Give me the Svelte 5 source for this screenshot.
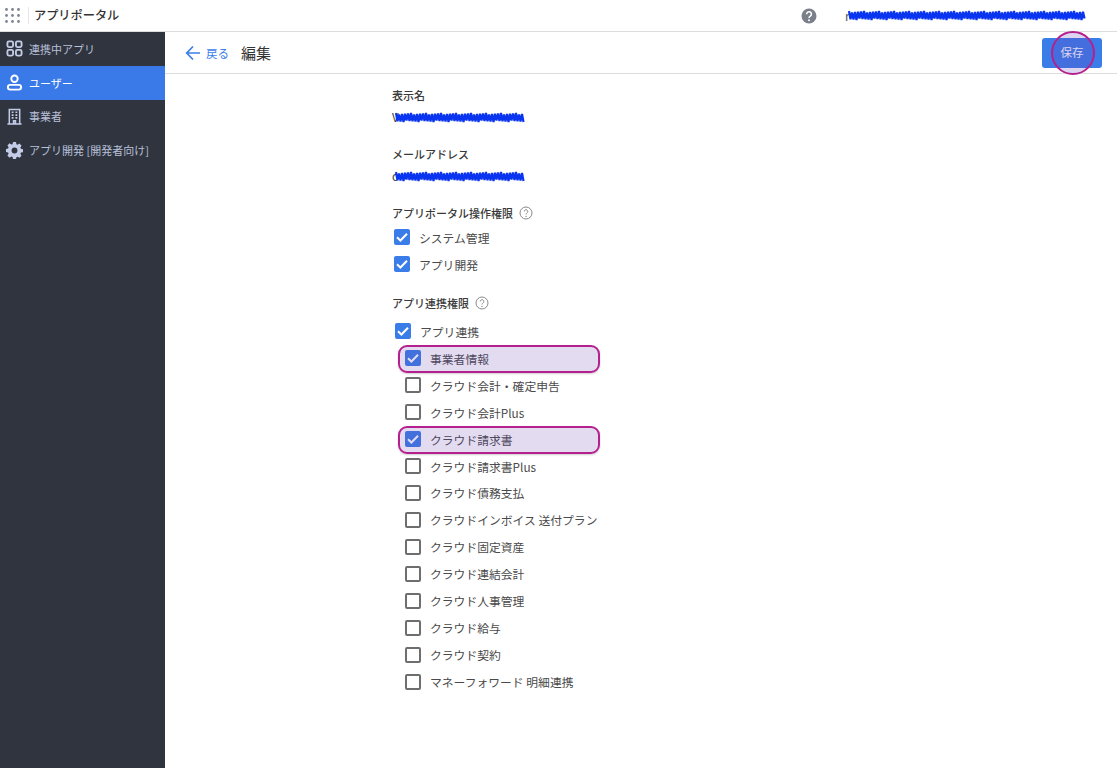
<script lang="ts">
  const nav = [
    { id: 'apps', label: '連携中アプリ' },
    { id: 'user', label: 'ユーザー', active: true },
    { id: 'office', label: '事業者' },
    { id: 'dev', label: 'アプリ開発 [開発者向け]' }
  ];
  const portal = ['システム管理', 'アプリ開発'];
  const apps = [
    { label: '事業者情報', checked: true },
    { label: 'クラウド会計・確定申告' },
    { label: 'クラウド会計Plus' },
    { label: 'クラウド請求書', checked: true },
    { label: 'クラウド請求書Plus' },
    { label: 'クラウド債務支払' },
    { label: 'クラウドインボイス 送付プラン' },
    { label: 'クラウド固定資産' },
    { label: 'クラウド連結会計' },
    { label: 'クラウド人事管理' },
    { label: 'クラウド給与' },
    { label: 'クラウド契約' },
    { label: 'マネーフォワード 明細連携' }
  ];

  // redaction marker: a tight zigzag with a bit of fixed jitter
  function scrawl(w: number, h: number) {
    let d = '';
    for (let x = 0, i = 0; x <= w; x += 1.5, i++) {
      const j = ((i * 7) % 5) * 0.35;
      const y = i % 2 ? h - j : j;
      d += (i ? 'L' : 'M') + x + ' ' + y;
    }
    return d;
  }
</script>

{#snippet box(checked)}
  <span class="box" class:checked>
    {#if checked}
      <svg viewBox="0 0 16 16" width="16" height="16"><path d="M3 8.2l3.4 3.3L13 4.8" fill="none" stroke="#fff" stroke-width="2"/></svg>
    {/if}
  </span>
{/snippet}

{#snippet help()}
  <svg class="help" viewBox="0 0 14 14" width="14" height="14">
    <circle cx="7" cy="7" r="6" fill="none" stroke="#8a8a8a" stroke-width="1"/>
    <path d="M5.2 5.5a1.8 1.8 0 1 1 2.7 1.6c-.6.4-.9.7-.9 1.4" fill="none" stroke="#8a8a8a" stroke-width="1"/>
    <circle cx="7" cy="10.4" r=".7" fill="#8a8a8a"/>
  </svg>
{/snippet}

{#snippet scribble(w, h)}
  <svg class="scribble" viewBox="-1 -1 {w + 2} {h + 2}" width={w + 2} height={h + 2}>
    <path d={scrawl(w, h)} fill="none" stroke="#0a35f0" stroke-width="2.2"/>
  </svg>
{/snippet}

<div class="page">
  <header class="top">
    <svg class="grid" viewBox="0 0 15 15" width="15" height="15" fill="#7d8391">
      {#each [1.5, 7.5, 13.5] as y}
        {#each [1.5, 7.5, 13.5] as x}
          <circle cx={x} cy={y} r="1.4"/>
        {/each}
      {/each}
    </svg>
    <span class="sep"></span>
    <span class="title">アプリポータル</span>
    <svg class="q" viewBox="0 0 16 16" width="16" height="16">
      <circle cx="8" cy="8" r="7.5" fill="#7b7f8a"/>
      <path d="M5.6 6.2a2.4 2.4 0 1 1 3.7 2c-.9.6-1.3.9-1.3 1.9" fill="none" stroke="#fff" stroke-width="1.6"/>
      <circle cx="8" cy="12.3" r="1" fill="#fff"/>
    </svg>
    <span class="account"><i>r</i>{@render scribble(236, 9)}</span>
  </header>

  <div class="body">
    <aside>
      {#each nav as item}
        <div class="nav" class:active={item.active}>
          <span class="ico">
            {#if item.id === 'apps'}
              <svg viewBox="0 0 18 18" width="17" height="17" fill="none" stroke="currentColor" stroke-width="2">
                <rect x="1.5" y="1.5" width="6" height="6" rx="1.6"/><rect x="10.5" y="1.5" width="6" height="6" rx="1.6"/>
                <rect x="1.5" y="10.5" width="6" height="6" rx="1.6"/><rect x="10.5" y="10.5" width="6" height="6" rx="1.6"/>
              </svg>
            {:else if item.id === 'user'}
              <svg viewBox="0 0 18 18" width="17" height="17" fill="none" stroke="currentColor" stroke-width="2">
                <circle cx="9" cy="5" r="3.4"/><rect x="2" y="11.5" width="14" height="5" rx="2.5"/>
              </svg>
            {:else if item.id === 'office'}
              <svg viewBox="0 0 18 18" width="17" height="17" fill="none" stroke="currentColor" stroke-width="1.6">
                <path d="M1.5 17h15M3.5 17V1.5h11V17"/>
                <path d="M6 4.5h2M10 4.5h2M6 7.5h2M10 7.5h2M6 10.5h2M10 10.5h2M8 17v-3.5h2V17" stroke-width="1.7"/>
              </svg>
            {:else}
              <svg viewBox="0 0 18 18" width="17" height="17" fill="currentColor">
                <path fill-rule="evenodd" d="M7.4 .5h3.2l.4 2.3 1.3.6 2-1.3 2.2 2.3-1.3 1.9.6 1.4 2.2.4v3.2l-2.2.4-.6 1.4 1.3 1.9-2.2 2.3-2-1.3-1.3.6-.4 2.3H7.4L7 16.4l-1.3-.6-2 1.3-2.2-2.3 1.3-1.9-.6-1.4L0 11.1V7.9l2.2-.4.6-1.4L1.5 4.2l2.2-2.3 2 1.3L7 2.8zM9 6.4a3.1 3.1 0 1 0 0 6.2 3.1 3.1 0 0 0 0-6.2z" transform="translate(0 -.5)"/>
              </svg>
            {/if}
          </span>
          <span>{item.label}</span>
        </div>
      {/each}
    </aside>

    <main>
      <div class="subbar">
        <svg class="back" viewBox="0 0 16 16" width="16" height="16" fill="none" stroke="#3b7de8" stroke-width="1.7">
          <path d="M15 8H2M8 1.5L1.7 8 8 14.5"/>
        </svg>
        <span class="backlabel">戻る</span>
        <h1>編集</h1>
        <button>保存<span class="ring"></span></button>
      </div>

      <form>
        <div class="label">表示名</div>
        <div class="value"><i>V</i>{@render scribble(128, 9)}</div>

        <div class="label">メールアドレス</div>
        <div class="value"><i>c</i>{@render scribble(128, 9)}</div>

        <div class="label">アプリポータル操作権限 {@render help()}</div>
        <div class="checks">
          {#each portal as p}
            <div class="check">{@render box(true)}<span>{p}</span></div>
          {/each}
        </div>

        <div class="label">アプリ連携権限 {@render help()}</div>
        <div class="check parent">{@render box(true)}<span>アプリ連携</span></div>
        {#each apps as a}
          <div class="check child" class:mark={a.checked}>{@render box(!!a.checked)}<span>{a.label}</span></div>
        {/each}
      </form>
    </main>
  </div>
</div>

<style>
  :global(body) { margin: 0; background: #fff; }
  .page { height: 768px; overflow: hidden; font-family: "Noto Sans CJK JP", "Noto Sans", sans-serif; color: #3a3a3a; font-size: 13px; }
  i { font-style: normal; }

  .top { height: 31px; border-bottom: 1px solid #dcdcdc; display: flex; align-items: center; }
  .grid { margin-left: 5px; }
  .sep { width: 1px; height: 17px; background: #e6e6e6; margin: 0 5px 0 8px; }
  .title { font-size: 12.2px; font-weight: 500; color: #333; margin-top: -1px; }
  .q { margin-left: auto; }
  .account { display: flex; align-items: center; width: 240px; margin: 0 32px 0 28px; color: #555; font-size: 12px; }
  .account i { width: 3px; }
  .scribble { display: block; flex: none; }

  .body { display: flex; height: 736px; }
  aside { width: 165px; flex: none; background: #2f343f; color: #b9c0d8; }
  .nav { height: 33.75px; display: flex; align-items: center; font-size: 11px; }
  .nav.active { background: #3a7ae8; color: #fff; }
  .ico { width: 29px; display: flex; padding-left: 5.5px; box-sizing: border-box; color: #c3cbe6; }
  .nav.active .ico { color: #fff; }

  main { flex: 1; min-width: 0; }
  .subbar { height: 41px; border-bottom: 1px solid #dcdcdc; display: flex; align-items: center; padding: 0 15px 0 20px; }
  .back { margin-right: 5px; }
  .backlabel { color: #3b7de8; font-size: 11.5px; margin-right: 12px; }
  h1 { margin: -1px 0 0; font-size: 15px; font-weight: 400; color: #333; }
  button { position: relative; margin-left: auto; width: 60px; height: 30px; background: #3b7de8; color: #fff; border: 0; border-radius: 3px; font: inherit; font-size: 11.5px; padding: 0 0 1px; }
  .ring { position: absolute; left: 9px; top: -7px; width: 44px; height: 44px; box-sizing: border-box; border: 2px solid #b5208f; border-radius: 50%; background: rgba(100, 60, 180, .22); }

  form { width: 500px; padding: 12px 0 0 227px; }
  .label { font-size: 11px; font-weight: 500; color: #3a3a3a; height: 18px; line-height: 18px; display: flex; align-items: center; gap: 3px; }
  .help { margin-left: 3px; }
  .value { height: 41px; padding-top: 6px; box-sizing: border-box; display: flex; align-items: flex-start; font-size: 11.5px; line-height: 14px; }
  .value i { width: 3px; }
  .value .scribble { margin-top: 2px; }
  .checks { padding-top: 2px; margin-bottom: 16px; }
  .check { height: 26.95px; display: flex; align-items: center; padding-left: 2px; font-size: 11.8px; color: #4a4a4a; position: relative; }
  .box { width: 16px; height: 16px; box-sizing: border-box; border: 2px solid #6e6e6e; border-radius: 2px; display: block; flex: none; margin-right: 9px; }
  .box.checked { background: #3b7de8; border: 0; }
  .box svg { display: block; }
  .parent { padding-left: 3px; margin-top: 6px; }
  .child { padding-left: 13px; }
  .mark::before { content: ""; position: absolute; left: 6px; width: 202px; top: 0; height: 28px; box-sizing: border-box; border: 2px solid #b5208f; border-radius: 9px; background: rgba(100, 60, 180, .18); box-shadow: 0 1px 2px rgba(0,0,0,.2); }
</style>
